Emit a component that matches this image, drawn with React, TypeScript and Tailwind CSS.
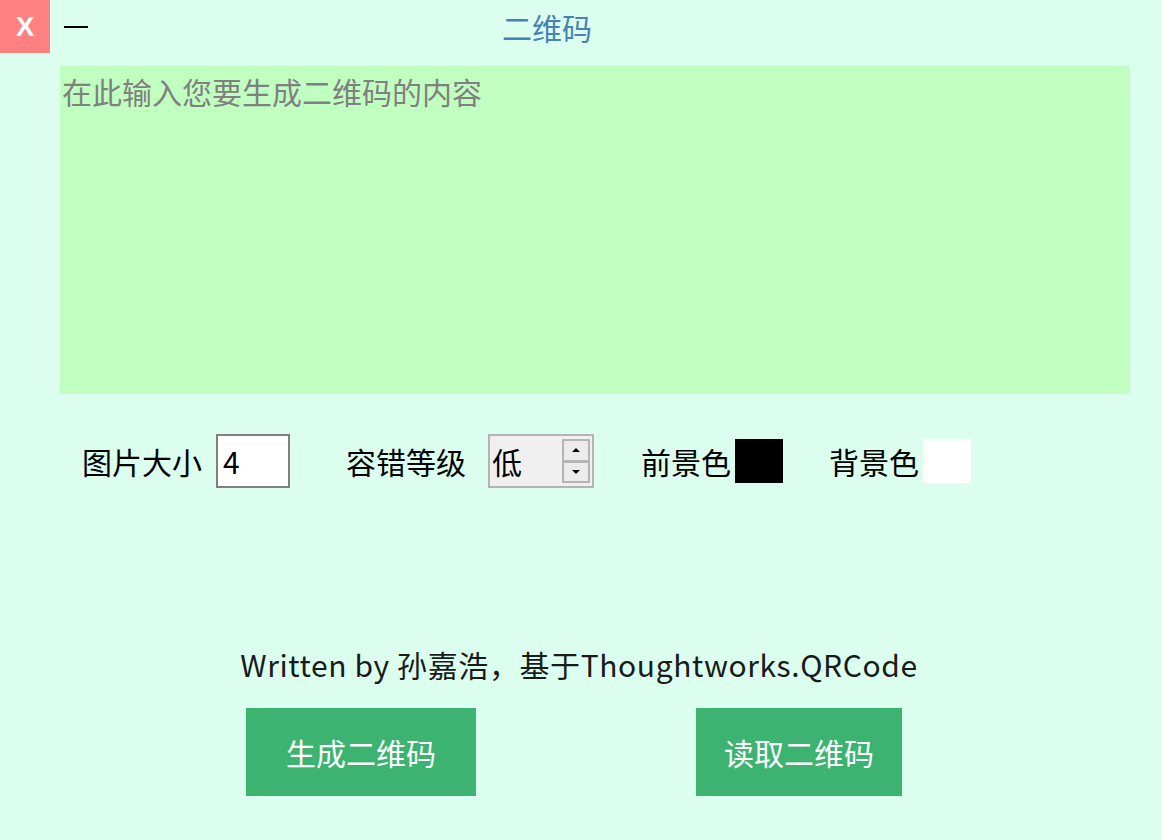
const font = "font-['Microsoft_YaHei','Noto_Sans_CJK_SC',sans-serif]";

const Spinner: React.FC = () => {
  return (
    <div className="flex flex-col w-[28px] h-[44px] border-2 border-[#b4b4b4] bg-[#b4b4b4] gap-[3px]">
      <div className="flex-1 bg-[#ececec] flex items-center justify-center">
        <div className="w-0 h-0 border-l-[4px] border-r-[4px] border-b-[4px] border-l-transparent border-r-transparent border-b-black" />
      </div>
      <div className="flex-1 bg-[#ececec] flex items-center justify-center">
        <div className="w-0 h-0 border-l-[4px] border-r-[4px] border-t-[4px] border-l-transparent border-r-transparent border-t-black" />
      </div>
    </div>
  );
};

const App: React.FC = () => {
  return (
    <div className={`w-[1162px] h-[840px] bg-[#dbfeee] text-[30px] text-black ${font}`}>
      {/* title bar */}
      <div className="flex h-[53px] items-center">
        <div className="w-[50px] h-[53px] bg-[#ff8080] flex items-center justify-center text-white font-bold text-[28px] font-['Liberation_Sans',sans-serif]">
          X
        </div>
        <div className="ml-[14px] w-[24px] h-[2px] bg-black" />
        <div className="ml-[414px] text-[#4682b4] leading-none">二维码</div>
      </div>

      {/* input area */}
      <div className="mt-[13px] ml-[60px] w-[1070px] h-[328px] bg-[#c1ffc1]">
        <textarea
          className="w-full h-full resize-none bg-transparent outline-none pl-[2px] pt-[10px] leading-[30px] placeholder:text-[#808080]"
          placeholder="在此输入您要生成二维码的内容"
        />
      </div>

      {/* options */}
      <div className="mt-[40px] flex items-center h-[54px]">
        <span className="ml-[82px] leading-none">图片大小</span>
        <div className="ml-[14px] w-[74px] h-[54px] border-2 border-[#808080] bg-white flex items-center pl-[5px] leading-none">
          4
        </div>
        <span className="ml-[56px] leading-none">容错等级</span>
        <div className="ml-[22px] w-[106px] h-[54px] border-2 border-[#b4b4b4] bg-[#f0f0f0] flex items-center justify-between pl-[2px] pr-[2px]">
          <span className="leading-none">低</span>
          <Spinner />
        </div>
        <span className="ml-[47px] leading-none">前景色</span>
        <div className="ml-[4px] w-[48px] h-[44px] bg-black" />
        <span className="ml-[46px] leading-none">背景色</span>
        <div className="ml-[4px] w-[48px] h-[44px] bg-white" />
      </div>

      {/* footer */}
      <div className="mt-[161px] text-center text-[#1a1a1a] leading-[30px] pr-[4px] tracking-[0.6px]">
        Written by 孙嘉浩，基于Thoughtworks.QRCode
      </div>
      <div className="mt-[29px] flex">
        <button className="ml-[246px] w-[230px] h-[88px] bg-[#3cb371] text-white">生成二维码</button>
        <button className="ml-[220px] w-[206px] h-[88px] bg-[#3cb371] text-white">读取二维码</button>
      </div>
    </div>
  );
};

export default App;
